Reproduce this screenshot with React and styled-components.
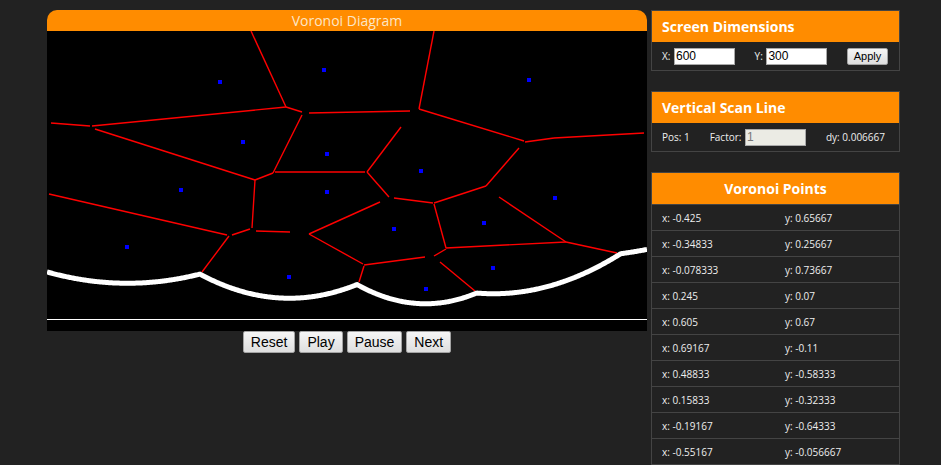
import React, { useMemo } from 'react'
import styled, { createGlobalStyle } from 'styled-components'

const W = 600
const H = 300
const SWEEP = 288

const points = [
    { x: '-0.425', y: '0.65667' },
    { x: '-0.34833', y: '0.25667' },
    { x: '-0.078333', y: '0.73667' },
    { x: '0.245', y: '0.07' },
    { x: '0.605', y: '0.67' },
    { x: '0.69167', y: '-0.11' },
    { x: '0.48833', y: '-0.58333' },
    { x: '0.15833', y: '-0.32333' },
    { x: '-0.19167', y: '-0.64333' },
    { x: '-0.55167', y: '-0.056667' },
]

// sites below the list's visible part
const extraPoints = [
    { x: '-0.068333', y: '0.18333' },
    { x: '-0.068333', y: '-0.07' },
    { x: '0.45833', y: '-0.28333' },
    { x: '-0.73167', y: '-0.44333' },
    { x: '0.26167', y: '-0.71667' },
]

// finished voronoi edges, canvas pixels
const edges = [
    [204, 0, 239, 76], [239, 76, 255, 81], [262, 82, 363, 80],
    [4, 92, 43, 95], [45, 95, 239, 76], [48, 98, 208, 149],
    [208, 149, 226, 142], [255, 84, 226, 142], [228, 141, 318, 141],
    [208, 149, 205, 197], [2, 163, 180, 204], [185, 204, 203, 198],
    [209, 200, 243, 201], [182, 205, 155, 241], [262, 203, 333, 171],
    [262, 203, 316, 233], [387, 0, 372, 78], [372, 78, 477, 110],
    [478, 111, 507, 107], [507, 107, 597, 102], [354, 96, 320, 141],
    [320, 141, 342, 166], [347, 167, 386, 172], [387, 172, 439, 155],
    [439, 155, 472, 117], [387, 173, 399, 217], [399, 217, 519, 211],
    [452, 166, 519, 211], [519, 211, 570, 222], [317, 234, 378, 226],
    [387, 225, 399, 218], [317, 235, 312, 251], [393, 231, 428, 260],
]

const toCanvas = (p) => ({
    cx: (parseFloat(p.x) + 1) * W / 2,
    cy: (1 - parseFloat(p.y)) * H / 2,
})

const GlobalStyle = createGlobalStyle`
    body {
        margin: 0;
        background: #222;
        font-family: "Open Sans", "Liberation Sans", sans-serif;
    }
`

export default function App() {
    const sites = useMemo(() => [...points, ...extraPoints].map(toCanvas), [])

    const beach = useMemo(() => {
        let d = ''
        for (let x = 0; x <= W; x += 1) {
            let best = -Infinity
            sites.forEach(({ cx, cy }) => {
                if (cy >= SWEEP) return
                const y = (SWEEP + cy) / 2 - ((x - cx) ** 2) / (8 * (SWEEP - cy))
                if (y > best) best = y
            })
            d += `${x === 0 ? 'M' : 'L'}${x} ${best.toFixed(2)} `
        }
        return d
    }, [sites])

    return (
        <Page>
            <GlobalStyle />
            <Diagram>
                <DiagramTitle>Voronoi Diagram</DiagramTitle>
                <Canvas width={W} height={H} viewBox={`0 0 ${W} ${H}`}>
                    <rect width={W} height={H} fill="#000" />
                    {edges.map((e, i) => (
                        <line key={i} x1={e[0]} y1={e[1]} x2={e[2]} y2={e[3]}
                            stroke="#f00" strokeWidth="1.4" />
                    ))}
                    <path d={beach} fill="none" stroke="#fff" strokeWidth="5" strokeLinejoin="round" />
                    <rect x="0" y={SWEEP} width={W} height="1" fill="#fff" />
                    {sites.map((s, i) => (
                        <rect key={i} x={Math.round(s.cx) - 2} y={Math.round(s.cy) - 2} width="4" height="4" fill="#00f" />
                    ))}
                </Canvas>
                <Controls>
                    <ControlButton>Reset</ControlButton>
                    <ControlButton>Play</ControlButton>
                    <ControlButton>Pause</ControlButton>
                    <ControlButton>Next</ControlButton>
                </Controls>
            </Diagram>

            <Sidebar>
                <Panel>
                    <PanelHeader>Screen Dimensions</PanelHeader>
                    <PanelBody $right={11}>
                        <Field>X: <TextInput defaultValue="600" /></Field>
                        <Field>Y: <TextInput defaultValue="300" /></Field>
                        <ApplyButton>Apply</ApplyButton>
                    </PanelBody>
                </Panel>

                <Panel>
                    <PanelHeader>Vertical Scan Line</PanelHeader>
                    <PanelBody $right={14}>
                        <Field>Pos: 1</Field>
                        <Field>Factor: <TextInput defaultValue="1" disabled /></Field>
                        <Field>dy: 0.006667</Field>
                    </PanelBody>
                </Panel>

                <Panel>
                    <PanelHeader $center>Voronoi Points</PanelHeader>
                    {points.map((p, i) => (
                        <PointRow key={i}>
                            <span>x: {p.x}</span>
                            <span>y: {p.y}</span>
                        </PointRow>
                    ))}
                </Panel>
            </Sidebar>
        </Page>
    )
}

const Page = styled.div`
    display: flex;
    align-items: flex-start;
    gap: 4px;
    padding: 10px 0 0 47px;
`
const Diagram = styled.div`
    width: 600px;
`
const DiagramTitle = styled.div`
    height: 21px;
    line-height: 21px;
    background: #ff8c00;
    border-radius: 10px 10px 0 0;
    color: #fde6c6;
    font-size: 14px;
    text-align: center;
`
const Canvas = styled.svg`
    display: block;
`
const Controls = styled.div`
    display: flex;
    justify-content: center;
    gap: 4px;
    margin-top: 0;
`
const ControlButton = styled.button`
    height: 22px;
    padding: 0 7px;
    font-family: "Liberation Sans", Arial, sans-serif;
    font-size: 14px;
    color: #000;
    background: linear-gradient(#f6f6f6, #dedede);
    border: 1px solid #a3a3a3;
    border-radius: 2px;
`
const Sidebar = styled.div`
    width: 249px;
    display: flex;
    flex-direction: column;
    gap: 20px;
`
const Panel = styled.div`
    border: 1px solid #444;
`
const PanelHeader = styled.div`
    height: 31px;
    line-height: 31px;
    padding: 0 10px;
    background: #ff8c00;
    color: #fff;
    font-size: 14px;
    font-weight: 700;
    text-align: ${(p) => (p.$center ? 'center' : 'left')};
`
const PanelBody = styled.div`
    height: 28px;
    display: flex;
    align-items: center;
    justify-content: space-between;
    padding: 0 ${(p) => p.$right}px 0 10px;
    color: #eee;
    font-size: 10px;
`
const Field = styled.span`
    display: flex;
    align-items: center;
    gap: 1px;
    white-space: pre;
`
const TextInput = styled.input`
    box-sizing: border-box;
    width: 61px;
    height: 17px;
    padding: 0 1px;
    border: 1px solid #a9a9a9;
    background: #fff;
    font-family: "Liberation Sans", Arial, sans-serif;
    font-size: 12px;
    color: #000;
    outline: none;
    &:disabled {
        background: #ebebe4;
        color: #777;
    }
`
const ApplyButton = styled.button`
    box-sizing: border-box;
    width: 41px;
    height: 17px;
    padding: 0;
    font-family: "Liberation Sans", Arial, sans-serif;
    font-size: 11px;
    color: #000;
    background: linear-gradient(#f6f6f6, #dedede);
    border: 1px solid #a3a3a3;
    border-radius: 2px;
`
const PointRow = styled.div`
    display: grid;
    grid-template-columns: 123px 1fr;
    height: 25px;
    align-items: center;
    padding-left: 10px;
    border-top: 1px solid #444;
    color: #eee;
    font-size: 10px;
    &:first-of-type {
        border-top: none;
    }
`
